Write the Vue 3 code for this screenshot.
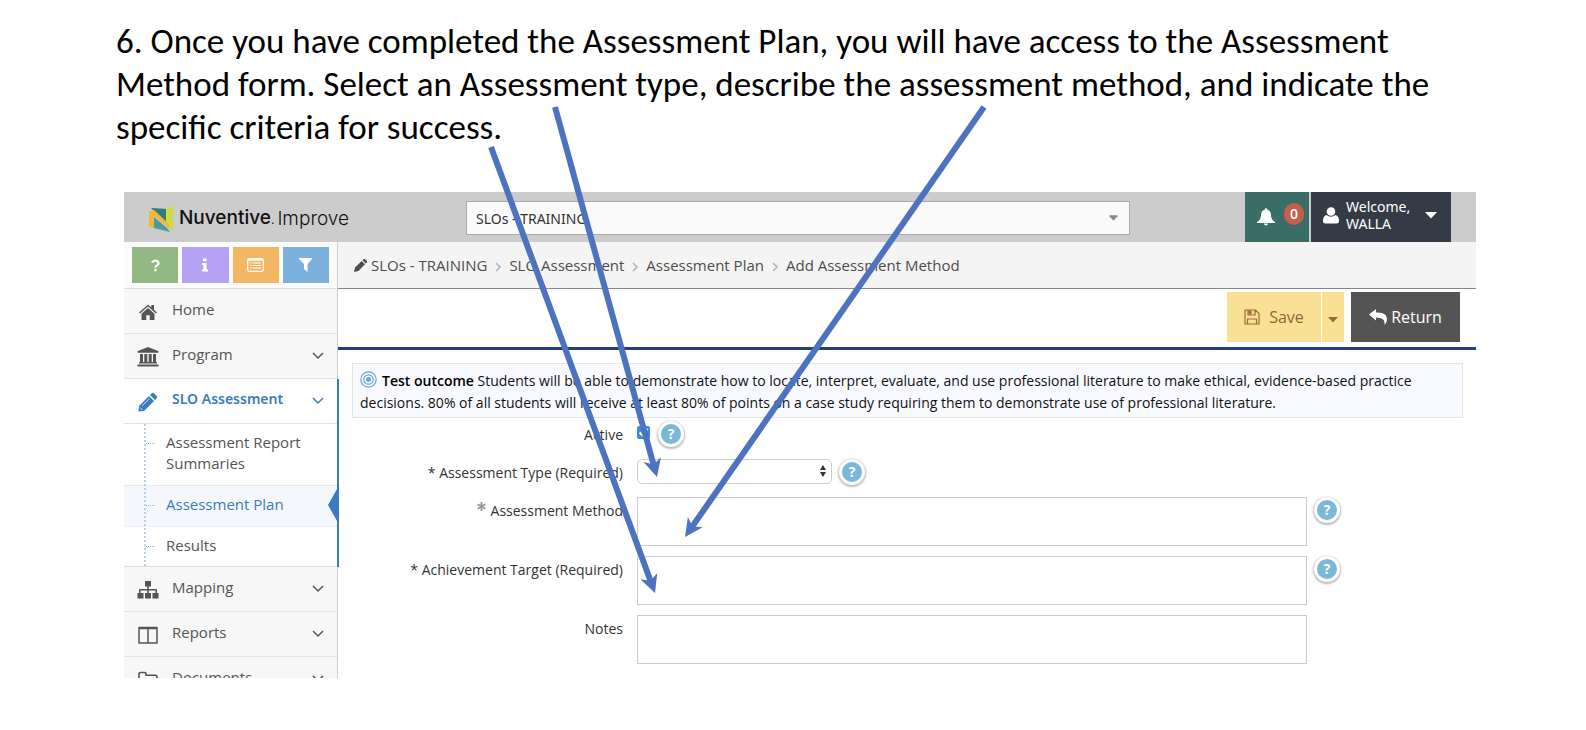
<script setup>
import { ref } from 'vue'

const unit = ref('SLOs - TRAINING')
const active = ref(true)
const assessmentType = ref('')
const crumbs = ['SLO Assessment', 'Assessment Plan', 'Add Assessment Method']
const subItems = [
  { label: 'Assessment Report Summaries', current: false },
  { label: 'Assessment Plan', current: true },
  { label: 'Results', current: false },
]
const lowerItems = [
  { label: 'Mapping', icon: 'sitemap' },
  { label: 'Reports', icon: 'columns' },
  { label: 'Documents', icon: 'folder' },
]
const areas = [
  { id: 'method', label: 'Assessment Method', mark: 'icon', help: true },
  { id: 'target', label: 'Achievement Target (Required)', mark: 'text', help: true },
  { id: 'notes', label: 'Notes', mark: '', help: false },
]
const arrows = [
  { x1: 555, y1: 107, x2: 657, y2: 477 },
  { x1: 491, y1: 147, x2: 655, y2: 593 },
  { x1: 984, y1: 107, x2: 685, y2: 537 },
]
function shaft(a) {
  const len = Math.hypot(a.x2 - a.x1, a.y2 - a.y1)
  const k = (len - 12) / len
  return `M${a.x1} ${a.y1}L${a.x1 + (a.x2 - a.x1) * k} ${a.y1 + (a.y2 - a.y1) * k}`
}
function headTransform(a) {
  const deg = (Math.atan2(a.y2 - a.y1, a.x2 - a.x1) * 180) / Math.PI
  return `translate(${a.x2} ${a.y2}) rotate(${deg})`
}
</script>

<template>
  <div class="slide">
    <h1 class="instruction">
      6. Once you have completed the Assessment Plan, you will have access to the Assessment<br />
      Method form. Select an Assessment type, describe the assessment method, and indicate the<br />
      specific criteria for success.
    </h1>

    <div class="app">
      <header class="topbar">
        <div class="brand">
          <svg class="logo" viewBox="0 0 24 26" aria-hidden="true">
            <path d="M2 2l17 1v17z" fill="#2f7d78" />
            <path d="M5 11v11l16 4-3-4z" fill="#4f9a94" />
            <path d="M17 3l7-3v25l-7-7z" fill="#cfdd3a" />
            <path d="M0 5l5-1 15 14 1 5L5 10v12l-5-1z" fill="#f3b63c" />
          </svg>
          <span class="brand-name">Nuventive<small>.</small></span>
          <span class="brand-product">Improve</span>
        </div>
        <div class="unit">
          <select v-model="unit" aria-label="Unit"><option>SLOs - TRAINING</option></select>
          <svg class="unit-caret" viewBox="0 0 10 6" aria-hidden="true"><path d="M1 0h8q1 0 .5 1L5.500 5.500q-.5.5-1 0L.5 1Q0 0 1 0z" fill="#8a8a8a" /></svg>
        </div>
        <div class="top-actions">
          <button class="alerts" type="button" aria-label="Notifications">
            <svg width="18" height="18" viewBox="0 0 18 18" aria-hidden="true"><path d="M9 0q1 0 1 1.500Q14 2.500 14 7q0 5 4 7v1H0v-1q4-2 4-7 0-4.500 4-5.500Q8 0 9 0zM7 15.500h4q0 2-2 2t-2-2z" fill="#fff" /></svg>
            <span class="badge">0</span>
          </button>
          <button class="user" type="button">
            <svg width="16" height="17" viewBox="0 0 16 17" aria-hidden="true"><circle cx="8" cy="4.500" r="4.300" fill="#fff" /><path d="M3.500 8Q8 11.500 12.500 8 16 9 16 14q0 2.500-2.500 2.500h-11Q0 16.500 0 14 0 9 3.500 8z" fill="#fff" /></svg>
            <span class="user-name">Welcome,<br />WALLA</span>
            <svg width="12" height="7" viewBox="0 0 12 7" aria-hidden="true"><path d="M0 0h12L6 6.500z" fill="#fff" /></svg>
          </button>
        </div>
      </header>

      <div class="body">
        <aside class="sidebar">
          <div class="shortcuts">
            <button class="sc green" type="button" aria-label="Help"><svg width="9" height="13" viewBox="0 0 10 14" aria-hidden="true"><path d="M1.500 4Q2 1.500 5 1.500T8.300 4.500Q8.300 6 6.500 7T5 9.500" fill="none" stroke="#fff" stroke-width="2.600" /><path d="M3.600 10.800h2.700v2.700H3.600z" fill="#fff" /></svg></button>
            <button class="sc violet" type="button" aria-label="Information"><svg width="8" height="14" viewBox="0 0 8 14" aria-hidden="true"><path d="M2 .5h3.500v2.700H2zM1 5h4.500v6.500H7V13.500H1v-2h1.300V7H1z" fill="#fff" /></svg></button>
            <button class="sc orange" type="button" aria-label="List"><svg width="17" height="14" viewBox="0 0 17 14" aria-hidden="true"><rect x=".7" y=".7" width="15.600" height="12.600" rx="1.500" fill="none" stroke="#fff" stroke-width="1.200" /><path d="M1 2h15" stroke="#fff" stroke-width="1.500" /><path d="M3 5h1.500M5.500 5H14M3 7.500h1.500M5.500 7.500H14M3 10h1.500M5.500 10H14" stroke="#fff" /></svg></button>
            <button class="sc blue" type="button" aria-label="Filter"><svg width="13" height="14" viewBox="0 0 13 14" aria-hidden="true"><path d="M0 0h13v1L8.500 6v8L5 11V6L0 1z" fill="#fff" /></svg></button>
          </div>
          <nav class="menu" aria-label="Main">
            <a class="item" href="#">
              <svg class="ico" viewBox="0 0 22 22" aria-hidden="true"><path d="M11 3.500L2 11.500l1 1 8-7 8 7 1-1-3-2.700V4h-2.700v2.400z" fill="#555" /><path d="M11 7l6.500 5.700V19h-4.800v-4.800H9.300V19H4.500v-6.300z" fill="#555" /></svg>
              <span>Home</span>
            </a>
            <a class="item" href="#">
              <svg class="ico" viewBox="0 0 22 22" aria-hidden="true"><path d="M11 1l10.500 4.300v1.400H.5V5.300zM3 8h3v8h1.300V8h3v8h1.400V8h3v8H16V8h3v8h1v1.500H2V16h1zM.5 18.500h21v2H.5z" fill="#555" /></svg>
              <span>Program</span>
              <svg class="chev" viewBox="0 0 12 8" aria-hidden="true"><path d="M1 1l5 5 5-5" /></svg>
            </a>
            <div class="open">
              <a class="item selected" href="#">
                <svg class="ico" viewBox="0 0 22 22" aria-hidden="true"><path d="M2 15L12 5l5 5L7 20l-5.500.5zM13 4l1.700-1.700q1-1 2.200 0l2.800 2.800q1 1 0 2.200L18 9z" fill="#3b7bbf" /><path d="M5 15l7.500-7.500M3 16.500L5.500 19" stroke="#d5e4f3" stroke-width=".9" /></svg>
                <span>SLO Assessment</span>
                <svg class="chev" viewBox="0 0 12 8" aria-hidden="true"><path d="M1 1l5 5 5-5" /></svg>
              </a>
              <div class="submenu">
                <a v-for="s in subItems" :key="s.label" class="sub" :class="{ current: s.current }" href="#">
                  <span>{{ s.label }}</span>
                  <svg v-if="s.current" class="pointer" viewBox="0 0 9 32" aria-hidden="true"><path d="M9 0v32L0 16z" fill="#3b7bbf" /></svg>
                </a>
              </div>
            </div>
            <a v-for="m in lowerItems" :key="m.label" class="item" href="#">
              <svg class="ico" viewBox="0 0 22 22" aria-hidden="true">
                <path v-if="m.icon === 'sitemap'" d="M8 2h6v5.500h-2.200V10H19q1 0 1 1v3h1.500v5.500h-6V14h3v-2.500h-6.700V14H14v5.500H8V14h2.200v-2.500H3.500V14h3v5.500h-6V14H2v-3q0-1 1-1h7.200V7.500H8z" fill="#555" />
                <path v-else-if="m.icon === 'columns'" d="M2 3.500h18V19H2zM2 4.500h18M11 4v15" fill="none" stroke="#555" stroke-width="1.500" stroke-linejoin="round" />
                <path v-else d="M2 18V5q0-1.500 1.500-1.500h4Q9 3.500 9 5v1.200h9.500Q20 6.200 20 7.700V18z" fill="none" stroke="#555" stroke-width="1.600" />
              </svg>
              <span>{{ m.label }}</span>
              <svg class="chev" viewBox="0 0 12 8" aria-hidden="true"><path d="M1 1l5 5 5-5" /></svg>
            </a>
          </nav>
        </aside>

        <main class="main">
          <nav class="crumbs" aria-label="Breadcrumb">
            <svg width="13" height="13" viewBox="0 0 13 13" aria-hidden="true"><path d="M0 13l1-4.500L7.700 2 11 5.300 4.500 12zM8.500 1.200L9.700 0q.6-.4 1.200 0L13 2.100q.4.600 0 1.200l-1.200 1.200z" fill="#4d4d4d" /></svg>
            <a class="first" href="#">{{ unit }}</a>
            <template v-for="c in crumbs" :key="c">
              <svg class="sep" width="6" height="10" viewBox="0 0 6 10" aria-hidden="true"><path d="M1 1l4 4-4 4" fill="none" stroke="#b2b6bf" stroke-width="1.600" /></svg>
              <a href="#">{{ c }}</a>
            </template>
          </nav>

          <div class="toolbar">
            <div class="split">
              <button class="save" type="button">
                <svg width="16" height="16" viewBox="0 0 16 16" aria-hidden="true"><path d="M1 1h10.500L15 4.500V15H1zM4 1v5h7V1M3.500 15v-5h9v5" fill="none" stroke="#9a6a3c" stroke-width="1.200" /><path d="M4.500 1.500h3v4h-3z" fill="#9a6a3c" /></svg>
                Save
              </button>
              <button class="save-more" type="button" aria-label="More save options"><svg width="10" height="6" viewBox="0 0 10 6" aria-hidden="true"><path d="M0 0h10L5 5.500z" fill="#9a6a3c" /></svg></button>
            </div>
            <button class="return" type="button">
              <svg width="18" height="16" viewBox="0 0 18 16" aria-hidden="true"><path d="M0 5.500L7 0v3.500q11-.5 11 6.500 0 3-2 5.500-.5.500-.4-.5Q16.500 8.500 7 8.500V11.500z" fill="#fff" /></svg>
              Return
            </button>
          </div>

          <p class="outcome">
            <svg class="target" width="17" height="17" viewBox="0 0 17 17" aria-hidden="true"><circle cx="8.500" cy="8.500" r="2.500" fill="#6aa6d8" /><g fill="none" stroke="#6aa6d8"><circle cx="8.500" cy="8.500" r="4.700" stroke-width="1.200" /><circle cx="8.500" cy="8.500" r="7.700" stroke-width="1.200" /></g></svg>
            <strong>Test outcome</strong> Students will be able to demonstrate how to locate, interpret, evaluate, and use professional literature to make ethical, evidence-based practice decisions. 80% of all students will receive at least 80% of points on a case study requiring them to demonstrate use of professional literature.
          </p>

          <form class="form" @submit.prevent>
            <div class="row row-active">
              <label for="active">Active</label>
              <input id="active" v-model="active" class="check" type="checkbox" />
              <button class="help" type="button" aria-label="Help: Active">?</button>
            </div>
            <div class="row row-type">
              <label for="type">* Assessment Type (Required)</label>
              <div class="type">
                <select id="type" v-model="assessmentType"><option value=""></option></select>
                <svg class="updown" viewBox="0 0 6 12" aria-hidden="true"><path d="M3 0l3 5H0zM3 12l3-5H0z" fill="#333" /></svg>
              </div>
              <button class="help" type="button" aria-label="Help: Assessment Type">?</button>
            </div>
            <div v-for="a in areas" :key="a.id" class="row row-area">
              <label :for="a.id">
                <svg v-if="a.mark === 'icon'" class="req" width="9" height="9" viewBox="0 0 9 9" aria-hidden="true"><path d="M4.500 0v9M.6 2.200l7.800 4.600M8.400 2.200L.6 6.800" stroke="#999" stroke-width="1.900" /></svg><template v-if="a.mark === 'text'">* </template>{{ a.label }}
              </label>
              <textarea :id="a.id"></textarea>
              <button v-if="a.help" class="help" type="button" :aria-label="'Help: ' + a.label">?</button>
            </div>
          </form>
        </main>
      </div>
    </div>

    <svg class="arrows" aria-hidden="true">
      <g v-for="a in arrows" :key="a.x1">
        <path :d="shaft(a)" stroke="#4d72bf" stroke-width="6" />
        <path d="M0 0L-18 -9L-13 0L-18 9z" :transform="headTransform(a)" fill="#4d72bf" />
      </g>
    </svg>
  </div>
</template>

<style>
body { margin: 0; background: #fff; }
</style>

<style scoped>
* { box-sizing: border-box; }
.slide { position: relative; min-height: 730px; padding: 20px 110px 52px 124px; font-family: "Open Sans", "Noto Sans", sans-serif; font-size: 14px; color: #333; }
button, select, textarea { font: inherit; color: inherit; border: 0; border-radius: 0; margin: 0; padding: 0; }
button { cursor: pointer; }
svg { flex: none; }
a { color: inherit; text-decoration: none; }
.instruction { margin: 0 -60px 43px -8px; font-family: Carlito, Calibri, Lato, sans-serif; font-size: 35px; font-weight: 400; line-height: 43px; color: #000; white-space: nowrap; }
.app { height: 486px; overflow: hidden; }

.topbar { display: flex; height: 50px; background: #ccc; }
.brand { display: flex; align-items: center; width: 342px; padding: 4px 0 0 25px; color: #111; white-space: nowrap; }
.logo { width: 24px; height: 26px; margin-right: 6px; }
.brand-name { font: 500 19px/24px Inter, sans-serif; color: #111; }
.brand-name small { font-size: 12px; font-weight: 400; }
.brand-product { margin-left: 3px; font: 300 19px/24px Inter, sans-serif; }
.unit { position: relative; flex: 1; margin: 9px 0 7px; }
.unit select { width: 100%; height: 34px; padding: 0 30px 0 9px; border: 1px solid #aaa; background: #fafafa; appearance: none; font-family: "Noto Sans", sans-serif; font-size: 14px; color: #333; }
.unit-caret { position: absolute; right: 12px; top: 14px; width: 9px; height: 6px; pointer-events: none; }
.top-actions { display: flex; gap: 2px; margin: 0 25px 0 115px; }
.alerts { display: flex; align-items: center; gap: 9px; width: 64px; padding-left: 12px; background: #396d66; }
.badge { width: 20px; height: 22px; margin-bottom: 6px; border-radius: 10px; background: #c55f4c; color: #fff; font-size: 14px; font-weight: 600; line-height: 21px; }
.user { display: flex; align-items: center; gap: 7px; width: 140px; padding: 0 14px 4px 12px; background: #343b46; color: #fff; text-align: left; font-family: "Noto Sans", sans-serif; font-size: 14px; line-height: 17px; }
.user-name { flex: 1; }

.body { display: flex; }
.sidebar { flex: none; width: 214px; background: #f7f7f7; border-right: 1px solid #ccc; }
.shortcuts { display: flex; gap: 4px; height: 47px; padding: 5px 8px 6px; background: #fbfbfb; border-bottom: 1px solid #ddd; }
.sc { display: flex; flex: 1; align-items: center; justify-content: center; height: 36px; }
.green { background: #92b883; }
.violet { background: #b5a2f4; }
.orange { background: #f3b764; }
.blue { background: #7cb0dd; }
.item { display: flex; align-items: center; height: 45px; padding: 0 13px 5px 13px; border-bottom: 1px solid #e2e2e2; font-size: 15px; color: #555; background: #f7f7f7; }
.item span { flex: 1; }
.ico { width: 22px; height: 22px; margin: 6px 13px 0 0; }
.chev { width: 12px; height: 8px; margin-top: 4px; fill: none; stroke: #555; stroke-width: 1.500; }
.open { position: relative; width: 215px; border-right: 2px solid #3b7bbf; background: #fff; }
.selected { background: #fff; color: #3b7bbf; font-family: "Noto Sans", sans-serif; font-size: 14px; font-weight: 600; }
.selected .chev { stroke: #3b7bbf; }
.submenu { position: relative; border-bottom: 1px solid #ddd; }
.submenu::before { content: ""; position: absolute; z-index: 1; left: 20px; top: 0; bottom: 0; border-left: 2px dotted #bdd1e5; }
.sub { position: relative; display: block; padding: 8px 20px 11px 42px; font-size: 15px; line-height: 21px; color: #555; border-top: 1px dotted #ddd; }
.sub:first-child { border-top: 0; }
.sub:last-child { padding-bottom: 10px; }
.sub::before { content: ""; position: absolute; left: 22px; top: 19px; width: 9px; border-top: 1px dotted #8fb0d0; }
.current { background: #f4f7fc; color: #3b7bbf; }
.pointer { position: absolute; right: 0; top: 3px; width: 9px; height: 32px; }

.main { flex: 1; min-width: 0; background: #fff; }
.crumbs { display: flex; align-items: center; height: 47px; padding: 0 16px; background: #f4f4f4; border-bottom: 1px solid #888; font-size: 15px; color: #4d4d4d; white-space: nowrap; }
.first { margin-left: 4px; }
.sep { margin: 3px 8px 0; }
.toolbar { display: flex; justify-content: flex-end; gap: 7px; height: 61px; padding: 3px 16px 5px; border-bottom: 3px solid #23407a; font-size: 16px; }
.split { display: flex; gap: 1px; }
.save { display: flex; align-items: center; justify-content: center; gap: 9px; width: 94px; background: #f8e194; color: #946438; }
.save-more { width: 22px; background: #f8e194; }
.return { display: flex; align-items: center; justify-content: center; gap: 4px; width: 109px; background: #545454; color: #fff; }
.outcome { margin: 13px 13px 0 14px; padding: 6px 7px 3px; border: 1px solid #dfe5ed; background: #f8faff; font-size: 14px; line-height: 22px; color: #111; }
.target { vertical-align: -2px; margin-right: 5px; }
.outcome strong { font-weight: 600; color: #000; }

.row { display: flex; align-items: flex-start; padding: 0 136px 0 0; }
.row label { flex: none; width: 285px; margin-right: 14px; text-align: right; line-height: 20px; font-size: 14px; }
.row-active { height: 34px; margin-top: 3px; }
.row-type { height: 33px; margin-top: 4px; }
.row-active label { margin-top: 4px; }
.check { flex: none; width: 13px; height: 13px; margin: 5px 8px 0 0; accent-color: #3b88f5; }
.type { position: relative; width: 195px; margin-right: 7px; }
.row-type label { margin-top: 4px; }
.type select { display: block; width: 100%; height: 25px; border: 1px solid #ccc; border-radius: 5px; background: #fff; appearance: none; }
.updown { position: absolute; right: 6px; top: 6px; width: 6px; height: 12px; pointer-events: none; }
.row-area { height: 59px; padding-top: 5px; }
.row-area label { margin-top: 4px; }
.req { margin-right: 5px; vertical-align: 5px; }
textarea { display: block; flex: 1; min-width: 0; height: 49px; border: 1px solid #ccc; background: #fff; resize: none; margin-right: 7px; }
.row-area:last-child textarea { margin-right: 33px; }
.help { flex: none; width: 26px; height: 26px; border: 3px solid #fff; border-radius: 13px; background: #79b8d8; box-shadow: 0 1px 2px 1px #bbb; color: #fff; font-size: 14px; font-weight: 700; line-height: 20px; }
.arrows { position: absolute; left: 0; top: 0; width: 100%; height: 100%; pointer-events: none; }
</style>
